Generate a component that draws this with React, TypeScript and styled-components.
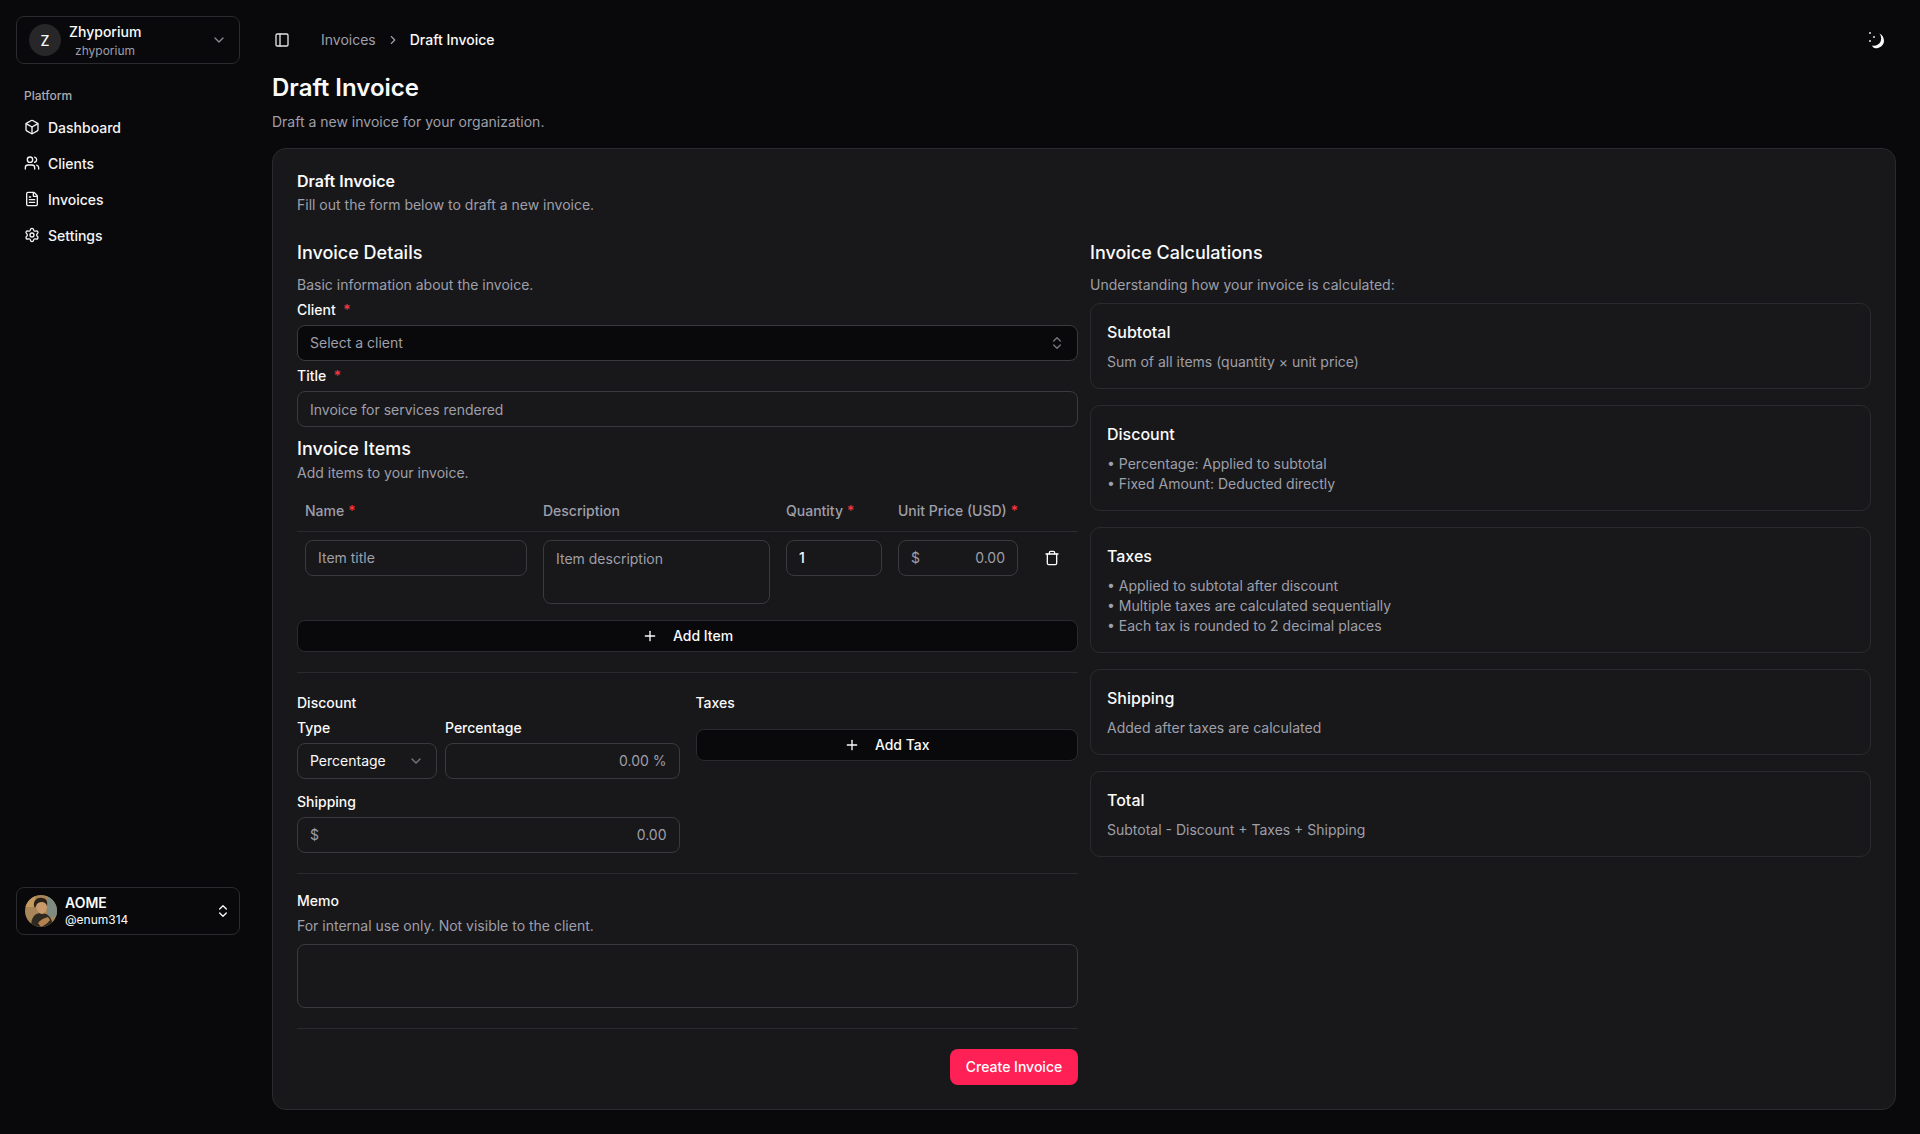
import React, { FC } from 'react';
import styled, { createGlobalStyle } from 'styled-components';
import {
  Box,
  ChevronDown,
  ChevronRight,
  ChevronsUpDown,
  FileText,
  PanelLeft,
  Plus,
  Settings,
  Trash,
  Users,
} from 'lucide-react';

const GlobalStyle = createGlobalStyle`
  html, body { margin: 0; padding: 0; background: #09090b; }
  body { font-family: Inter, "Liberation Sans", sans-serif; color: #fafafa; font-size: 14px; }
  * { box-sizing: border-box; }
  input, textarea, button { font-family: inherit; }
`;

const muted = '#9f9fa9';
const line = '#2b2b2f';
const fieldLine = '#3a3a3e';

const Page = styled.div`
  display: flex;
  min-height: 1134px;
  background: #09090b;
`;

const Sidebar = styled.aside`
  width: 256px;
  height: 951px;
  flex: none;
  padding: 16px;
  display: flex;
  flex-direction: column;
`;

const OrgSwitcher = styled.div`
  height: 48px;
  border: 1px solid ${line};
  border-radius: 8px;
  display: flex;
  align-items: center;
  padding: 0 12px;
  gap: 8px;
  color: #8a8a92;
`;

const OrgAvatar = styled.div`
  width: 32px;
  height: 32px;
  border-radius: 50%;
  background: #27272a;
  color: #fafafa;
  display: flex;
  align-items: center;
  justify-content: center;
  font-size: 14px;
  font-weight: 500;
  flex: none;
`;

const OrgText = styled.div`
  flex: 1;
  display: flex;
  flex-direction: column;
  gap: 2px;
  padding-top: 2px;
`;

const OrgName = styled.span`
  color: #fafafa;
  font-size: 14px;
  font-weight: 500;
  line-height: 18px;
`;

const OrgSlug = styled.span`
  color: ${muted};
  font-size: 12px;
  line-height: 16px;
  padding-left: 6px;
`;

const NavLabel = styled.div`
  height: 32px;
  margin-top: 15px;
  padding-left: 8px;
  display: flex;
  align-items: center;
  font-size: 12px;
  font-weight: 500;
  color: #a9a9b0;
`;

const Nav = styled.nav`
  display: flex;
  flex-direction: column;
  gap: 4px;
`;

const NavItem = styled.a`
  height: 32px;
  padding: 0 8px;
  display: flex;
  align-items: center;
  gap: 8px;
  font-size: 14px;
  font-weight: 500;
  color: #f4f4f5;
`;

const UserCard = styled.div`
  margin-top: auto;
  height: 48px;
  border: 1px solid ${line};
  border-radius: 8px;
  display: flex;
  align-items: center;
  padding: 0 8px;
  gap: 8px;
`;

const UserText = styled.div`
  flex: 1;
  display: flex;
  flex-direction: column;
`;

const UserName = styled.span`
  font-size: 14px;
  font-weight: 600;
  line-height: 18px;
`;

const UserHandle = styled.span`
  font-size: 12px;
  line-height: 16px;
`;

const Main = styled.main`
  flex: 1;
  min-width: 0;
  padding: 16px 24px 25px 16px;
`;

const TopBar = styled.header`
  height: 48px;
  display: flex;
  align-items: center;
  line-height: 20px;
`;

const PanelButton = styled.span`
  display: flex;
  margin: 0 31px 0 2px;
  color: #e4e4e7;
`;

const Crumb = styled.span<{ $current?: boolean }>`
  font-size: 14px;
  font-weight: ${(p) => (p.$current ? 500 : 400)};
  color: ${(p) => (p.$current ? '#fafafa' : muted)};
`;

const CrumbSep = styled.span`
  display: flex;
  margin: 0 10px;
  color: ${muted};
`;

const ThemeToggle = styled.span`
  display: flex;
  margin-left: auto;
  margin-right: 12px;
  color: #fafafa;
`;

const PageTitle = styled.h1`
  margin: 8px 0 0;
  font-size: 24px;
  line-height: 32px;
  font-weight: 600;
`;

const PageSub = styled.p`
  margin: 8px 0 16px;
  font-size: 14px;
  line-height: 20px;
  color: ${muted};
`;

const Card = styled.section`
  background: #18181b;
  border: 1px solid ${line};
  border-radius: 14px;
  padding: 24px;
`;

const CardTitle = styled.h2`
  margin: 0;
  font-size: 16px;
  line-height: 16px;
  font-weight: 600;
`;

const CardSub = styled.p`
  margin: 6px 0 24px;
  font-size: 14px;
  line-height: 20px;
  color: ${muted};
`;

const Columns = styled.div`
  display: grid;
  grid-template-columns: 781px 781px;
  gap: 12px;
`;

const Column = styled.div`
  display: flex;
  flex-direction: column;
`;

const SectionTitle = styled.h3<{ $top?: number }>`
  margin: ${(p) => p.$top ?? 0}px 0 0;
  font-size: 18px;
  line-height: 28px;
  font-weight: 500;
`;

const Hint = styled.p<{ $top?: number; $bottom?: number }>`
  margin: ${(p) => p.$top ?? 0}px 0 ${(p) => p.$bottom ?? 0}px;
  font-size: 14px;
  line-height: 20px;
  color: ${muted};
`;

const FieldLabel = styled.label<{ $top?: number }>`
  display: flex;
  gap: 7.5px;
  margin-top: ${(p) => p.$top ?? 8}px;
  margin-bottom: 8px;
  font-size: 14px;
  line-height: 14px;
  font-weight: 500;
  color: #fafafa;
`;

const Star = styled.span`
  color: #fb3640;
`;

const Control = styled.div<{ $dark?: boolean }>`
  height: 36px;
  border: 1px solid ${fieldLine};
  border-radius: 8px;
  background: ${(p) => (p.$dark ? '#09090b' : 'transparent')};
  padding: 0 12px;
  display: flex;
  align-items: center;
  justify-content: space-between;
  font-size: 14px;
  line-height: 20px;
  color: ${muted};
`;

const SelectValue = styled.span<{ $filled?: boolean }>`
  color: ${(p) => (p.$filled ? '#fafafa' : muted)};
`;

const SelectIcon = styled.span`
  display: flex;
  color: #77777f;
`;

const BareInput = styled.input<{ $right?: boolean; $strong?: boolean; $low?: boolean }>`
  flex: 1;
  min-width: 0;
  width: 100%;
  height: 20px;
  border: 0;
  outline: 0;
  padding: ${(p) => (p.$low ? '2px 0 0' : '0')};
  background: transparent;
  font-size: 14px;
  line-height: 20px;
  font-weight: ${(p) => (p.$strong ? 500 : 400)};
  color: #fafafa;
  text-align: ${(p) => (p.$right ? 'right' : 'left')};
  &::placeholder { color: ${muted}; opacity: 1; }
`;

const Area = styled.textarea<{ $height: number }>`
  display: block;
  width: 100%;
  height: ${(p) => p.$height}px;
  border: 1px solid ${fieldLine};
  border-radius: 8px;
  background: transparent;
  padding: 8px 12px;
  resize: none;
  outline: 0;
  font-size: 14px;
  line-height: 20px;
  color: #fafafa;
  &::placeholder { color: ${muted}; opacity: 1; }
`;

const ItemsHeader = styled.div`
  margin-top: 8px;
  height: 41px;
  display: grid;
  grid-template-columns: 238px 243px 112px 136px 1fr;
  align-items: center;
  border-bottom: 1px solid ${line};
`;

const HeaderCell = styled.div`
  padding: 0 8px;
  display: flex;
  gap: 4px;
  white-space: nowrap;
  font-size: 14px;
  line-height: 20px;
  font-weight: 500;
  color: ${muted};
`;

const ItemRow = styled.div`
  display: grid;
  grid-template-columns: 238px 243px 112px 136px 1fr;
  padding: 8px 0;
`;

const ItemCell = styled.div`
  padding: 0 8px;
`;

const TrashCell = styled.div`
  height: 36px;
  display: flex;
  align-items: center;
  justify-content: center;
  color: #fafafa;
`;

const DarkButton = styled.button<{ $top?: number }>`
  width: 100%;
  height: 32px;
  margin-top: ${(p) => p.$top ?? 0}px;
  border: 1px solid ${line};
  border-radius: 8px;
  background: #09090b;
  color: #fafafa;
  display: flex;
  align-items: center;
  justify-content: center;
  gap: 15px;
  font-size: 14px;
  line-height: 20px;
  font-weight: 500;
`;

const Divider = styled.hr<{ $top: number; $bottom: number }>`
  width: 100%;
  height: 1px;
  margin: ${(p) => p.$top}px 0 ${(p) => p.$bottom}px;
  border: 0;
  background: ${line};
`;

const PriceGrid = styled.div`
  display: grid;
  grid-template-columns: 1fr 1fr;
  gap: 16px;
`;

const DiscountRow = styled.div`
  display: grid;
  grid-template-columns: 140px 1fr;
  gap: 8px;
`;

const Footer = styled.div`
  display: flex;
  justify-content: flex-end;
`;

const PrimaryButton = styled.button`
  width: 128px;
  height: 36px;
  border: 0;
  border-radius: 8px;
  background: #ff2056;
  color: #fff;
  font-size: 14px;
  line-height: 20px;
  font-weight: 500;
`;

const InfoBoxes = styled.div`
  margin-top: 8px;
  display: flex;
  flex-direction: column;
  gap: 16px;
`;

const InfoBox = styled.div`
  border: 1px solid ${line};
  border-radius: 10px;
  padding: 16px;
`;

const InfoTitle = styled.h4`
  margin: 0 0 8px;
  font-size: 16px;
  line-height: 24px;
  font-weight: 500;
`;

const InfoText = styled.p`
  margin: 0;
  font-size: 14px;
  line-height: 20px;
  color: ${muted};
`;

const infos = [
  { title: 'Subtotal', lines: ['Sum of all items (quantity × unit price)'] },
  { title: 'Discount', lines: ['• Percentage: Applied to subtotal', '• Fixed Amount: Deducted directly'] },
  {
    title: 'Taxes',
    lines: [
      '• Applied to subtotal after discount',
      '• Multiple taxes are calculated sequentially',
      '• Each tax is rounded to 2 decimal places',
    ],
  },
  { title: 'Shipping', lines: ['Added after taxes are calculated'] },
  { title: 'Total', lines: ['Subtotal - Discount + Taxes + Shipping'] },
];

const navItems = [
  { label: 'Dashboard', icon: Box },
  { label: 'Clients', icon: Users },
  { label: 'Invoices', icon: FileText },
  { label: 'Settings', icon: Settings },
];

const MoonStars: FC = () => (
  <svg width="20" height="20" viewBox="0 0 20 20" fill="currentColor">
    <path d="M15.3 3.3C18.5 5 20 8 20 11c0 4-4 7.3-8.5 7.3-1.5 0-2.7-1.3-3.8-2.8 4 .8 7.6-.8 8.9-4 1.1-2.9.6-5.9-1.3-8.2z" />
    <circle cx="6" cy="3" r="0.9" />
    <circle cx="10" cy="7" r="0.9" />
    <circle cx="6" cy="11" r="0.9" />
  </svg>
);

const UserAvatar: FC = () => (
  <svg width="32" height="32" viewBox="0 0 32 32">
    <defs>
      <clipPath id="avatar-clip">
        <circle cx="16" cy="16" r="16" />
      </clipPath>
    </defs>
    <g clipPath="url(#avatar-clip)">
      <rect width="32" height="32" fill="#a8865a" />
      <rect x="22" width="10" height="22" fill="#7f8a80" />
      <rect y="0" width="10" height="12" fill="#c39b5f" />
      <path d="M6 32c0-10 4-14 10-14s11 3 12 14z" fill="#2e2a22" />
      <path d="M11 10c0-4 3-6 6-6s5 2 5 6c0 5-2 9-5 9s-6-4-6-9z" fill="#c89a6c" />
      <path d="M9 11c-1-6 4-9 8-8 4 0 6 3 5 8-1-3-3-4-5-4-3 0-5 1-6 4l-1 2z" fill="#2a1f16" />
      <path d="M13 28c2-3 6-5 10-6l2 3c-2 3-5 5-9 7z" fill="#b4824e" />
    </g>
  </svg>
);

const App: FC = () => (
  <>
    <GlobalStyle />
    <Page>
      <Sidebar>
        <OrgSwitcher>
          <OrgAvatar>Z</OrgAvatar>
          <OrgText>
            <OrgName>Zhyporium</OrgName>
            <OrgSlug>zhyporium</OrgSlug>
          </OrgText>
          <ChevronDown size={16} />
        </OrgSwitcher>
        <NavLabel>Platform</NavLabel>
        <Nav>
          {navItems.map(({ label, icon: Icon }) => (
            <NavItem key={label}>
              <Icon size={16} />
              {label}
            </NavItem>
          ))}
        </Nav>
        <UserCard>
          <UserAvatar />
          <UserText>
            <UserName>AOME</UserName>
            <UserHandle>@enum314</UserHandle>
          </UserText>
          <ChevronsUpDown size={16} />
        </UserCard>
      </Sidebar>

      <Main>
        <TopBar>
          <PanelButton><PanelLeft size={16} /></PanelButton>
          <Crumb>Invoices</Crumb>
          <CrumbSep><ChevronRight size={14} /></CrumbSep>
          <Crumb $current>Draft Invoice</Crumb>
          <ThemeToggle><MoonStars /></ThemeToggle>
        </TopBar>
        <PageTitle>Draft Invoice</PageTitle>
        <PageSub>Draft a new invoice for your organization.</PageSub>

        <Card>
          <CardTitle>Draft Invoice</CardTitle>
          <CardSub>Fill out the form below to draft a new invoice.</CardSub>
          <Columns>
            <Column>
              <SectionTitle>Invoice Details</SectionTitle>
              <Hint $top={8}>Basic information about the invoice.</Hint>
              <FieldLabel>Client <Star>*</Star></FieldLabel>
              <Control $dark>
                <SelectValue>Select a client</SelectValue>
                <SelectIcon><ChevronsUpDown size={16} /></SelectIcon>
              </Control>
              <FieldLabel>Title <Star>*</Star></FieldLabel>
              <Control>
                <BareInput $low placeholder="Invoice for services rendered" />
              </Control>

              <SectionTitle $top={8}>Invoice Items</SectionTitle>
              <Hint>Add items to your invoice.</Hint>
              <ItemsHeader>
                <HeaderCell>Name <Star>*</Star></HeaderCell>
                <HeaderCell>Description</HeaderCell>
                <HeaderCell>Quantity <Star>*</Star></HeaderCell>
                <HeaderCell>Unit Price (USD) <Star>*</Star></HeaderCell>
              </ItemsHeader>
              <ItemRow>
                <ItemCell>
                  <Control><BareInput placeholder="Item title" /></Control>
                </ItemCell>
                <ItemCell>
                  <Area $height={64} placeholder="Item description" />
                </ItemCell>
                <ItemCell>
                  <Control><BareInput $strong defaultValue="1" /></Control>
                </ItemCell>
                <ItemCell>
                  <Control>
                    <span>$</span>
                    <BareInput $right placeholder="0.00" />
                  </Control>
                </ItemCell>
                <TrashCell><Trash size={16} /></TrashCell>
              </ItemRow>
              <DarkButton $top={8}><Plus size={16} />Add Item</DarkButton>

              <Divider $top={20} $bottom={23} />

              <PriceGrid>
                <Column>
                  <FieldLabel $top={0}>Discount</FieldLabel>
                  <DiscountRow>
                    <Column>
                      <FieldLabel $top={3}>Type</FieldLabel>
                      <Control>
                        <SelectValue $filled>Percentage</SelectValue>
                        <SelectIcon><ChevronDown size={16} /></SelectIcon>
                      </Control>
                    </Column>
                    <Column>
                      <FieldLabel $top={3}>Percentage</FieldLabel>
                      <Control><BareInput $right placeholder="0.00 %" /></Control>
                    </Column>
                  </DiscountRow>
                  <FieldLabel $top={16}>Shipping</FieldLabel>
                  <Control>
                    <span>$</span>
                    <BareInput $right placeholder="0.00" />
                  </Control>
                </Column>
                <Column>
                  <FieldLabel $top={0}>Taxes</FieldLabel>
                  <DarkButton $top={11}><Plus size={16} />Add Tax</DarkButton>
                </Column>
              </PriceGrid>

              <Divider $top={20} $bottom={20} />

              <FieldLabel $top={0}>Memo</FieldLabel>
              <Hint $bottom={8}>For internal use only. Not visible to the client.</Hint>
              <Area $height={64} />

              <Divider $top={20} $bottom={20} />

              <Footer>
                <PrimaryButton>Create Invoice</PrimaryButton>
              </Footer>
            </Column>

            <Column>
              <SectionTitle>Invoice Calculations</SectionTitle>
              <Hint $top={8}>Understanding how your invoice is calculated:</Hint>
              <InfoBoxes>
                {infos.map((info) => (
                  <InfoBox key={info.title}>
                    <InfoTitle>{info.title}</InfoTitle>
                    {info.lines.map((text) => (
                      <InfoText key={text}>{text}</InfoText>
                    ))}
                  </InfoBox>
                ))}
              </InfoBoxes>
            </Column>
          </Columns>
        </Card>
      </Main>
    </Page>
  </>
);

export default App;
